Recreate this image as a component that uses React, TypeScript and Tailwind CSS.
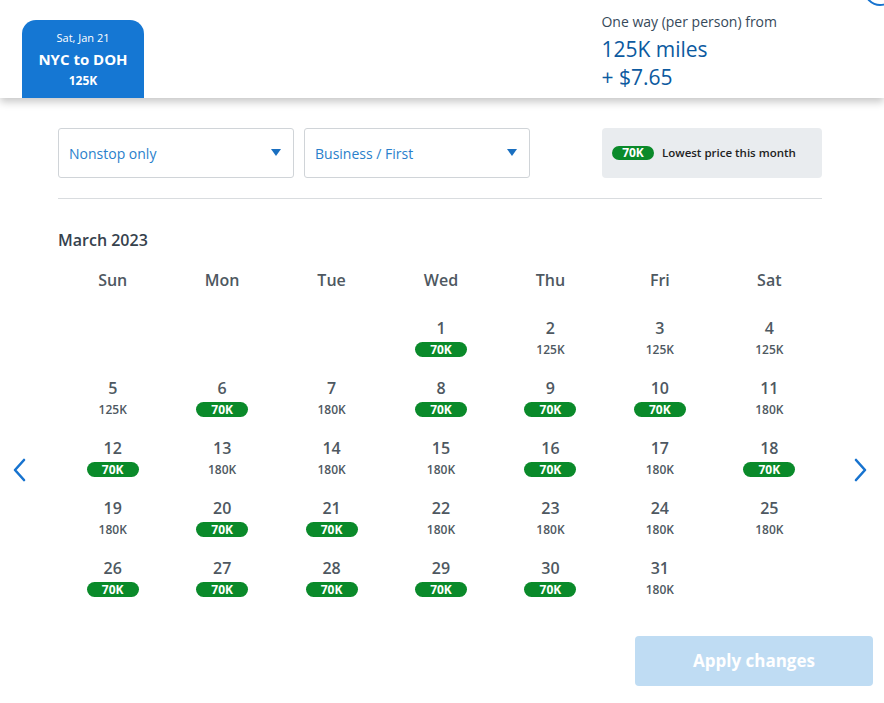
const font = { fontFamily: '"Open Sans", "Noto Sans", sans-serif' };

type Day = { d: number; p: string; low?: boolean } | null;

const days: Day[] = [
  null, null, null,
  { d: 1, p: "70K", low: true },
  { d: 2, p: "125K" },
  { d: 3, p: "125K" },
  { d: 4, p: "125K" },
  { d: 5, p: "125K" },
  { d: 6, p: "70K", low: true },
  { d: 7, p: "180K" },
  { d: 8, p: "70K", low: true },
  { d: 9, p: "70K", low: true },
  { d: 10, p: "70K", low: true },
  { d: 11, p: "180K" },
  { d: 12, p: "70K", low: true },
  { d: 13, p: "180K" },
  { d: 14, p: "180K" },
  { d: 15, p: "180K" },
  { d: 16, p: "70K", low: true },
  { d: 17, p: "180K" },
  { d: 18, p: "70K", low: true },
  { d: 19, p: "180K" },
  { d: 20, p: "70K", low: true },
  { d: 21, p: "70K", low: true },
  { d: 22, p: "180K" },
  { d: 23, p: "180K" },
  { d: 24, p: "180K" },
  { d: 25, p: "180K" },
  { d: 26, p: "70K", low: true },
  { d: 27, p: "70K", low: true },
  { d: 28, p: "70K", low: true },
  { d: 29, p: "70K", low: true },
  { d: 30, p: "70K", low: true },
  { d: 31, p: "180K" },
];

const weekdays = ["Sun", "Mon", "Tue", "Wed", "Thu", "Fri", "Sat"];

function Pill({ children }: { children: string }) {
  return (
    <span className="mt-[3px] inline-flex h-[15px] w-[52px] items-center justify-center rounded-full bg-[#0a8a2a] text-[12px] leading-none font-bold text-white">
      {children}
    </span>
  );
}

function Select({ label, width }: { label: string; width: string }) {
  return (
    <div className={`flex h-[50px] items-center justify-between rounded-[3px] border border-[#d0d4d8] bg-white pr-[12px] pl-[10px] ${width}`}>
      <span className="text-[14px] text-[#2a7fcb]">{label}</span>
      <svg width="10" height="8" viewBox="0 0 10 8">
        <path d="M0 0 H10 L5 7 Z" fill="#1a6fc0" />
      </svg>
    </div>
  );
}

function Chevron({ dir }: { dir: "left" | "right" }) {
  return (
    <svg width="14" height="24" viewBox="0 0 14 24" fill="none">
      <path
        d={dir === "left" ? "M12 2 L3 12 L12 22" : "M2 2 L11 12 L2 22"}
        stroke="#1773cf"
        strokeWidth="2.6"
        strokeLinecap="round"
        strokeLinejoin="round"
      />
    </svg>
  );
}

export default function App() {
  return (
    <div className="relative h-[703px] w-[884px] overflow-hidden bg-white" style={font}>
      <header className="relative z-10 flex h-[98px] justify-between bg-white pl-[22px] shadow-[0_4px_8px_rgba(0,0,0,0.22)]">
        <div className="mt-[20px] flex w-[122px] flex-col items-center rounded-t-[14px] bg-[#1577d3] pt-[10px] text-white">
          <span className="text-[11px] leading-[16px]">Sat, Jan 21</span>
          <span className="mt-[2px] text-[15px] leading-[22px] font-bold">NYC to DOH</span>
          <span className="mt-[2px] text-[12px] leading-[18px] font-bold">125K</span>
        </div>
        <div className="mr-[107px] pt-[12px]">
          <p className="text-[14px] leading-[20px] text-[#36495a]">One way (per person) from</p>
          <p className="mt-[3px] text-[21px] leading-[28px] text-[#0c5aa0]">125K miles</p>
          <p className="text-[21px] leading-[28px] text-[#0c5aa0]">+ $7.65</p>
        </div>
        <div className="absolute -top-[26px] right-[-12px] h-[32px] w-[32px] rounded-full border-2 border-[#1773cf]" />
      </header>

      <div className="flex items-stretch pt-[30px] pr-[62px] pl-[58px]">
        <div className="flex gap-[10px]">
          <Select label="Nonstop only" width="w-[236px]" />
          <Select label="Business / First" width="w-[226px]" />
        </div>
        <div className="ml-auto flex h-[50px] w-[220px] items-center gap-[8px] rounded-[4px] bg-[#e9ecef] pl-[10px]">
          <span className="inline-flex h-[14px] w-[42px] items-center justify-center rounded-full bg-[#0a8a2a] text-[12px] leading-none font-bold text-white">
            70K
          </span>
          <span className="text-[11.5px] font-semibold text-[#222]">Lowest price this month</span>
        </div>
      </div>

      <div className="mt-[20px] mr-[62px] ml-[58px] h-px bg-[#d9dcdf]" />

      <div className="flex items-start">
        <div className="flex w-[58px] justify-center pt-[259px] pr-[20px]">
          <Chevron dir="left" />
        </div>
        <div className="w-[766px]">
          <h2 className="mt-[30px] text-[16px] leading-[22px] font-semibold text-[#36424d]">March 2023</h2>
          <div className="mt-[19px] grid grid-cols-7">
            {weekdays.map((w) => (
              <div key={w} className="text-center text-[16px] leading-[20px] font-semibold text-[#4e5861]">
                {w}
              </div>
            ))}
          </div>
          <div className="mt-[27px] grid grid-cols-7">
            {days.map((day, i) =>
              day ? (
                <div key={i} className="flex h-[60px] flex-col items-center">
                  <span className="text-[16px] leading-[22px] font-semibold text-[#4e5861]">{day.d}</span>
                  {day.low ? (
                    <Pill>{day.p}</Pill>
                  ) : (
                    <span className="mt-[3px] text-[12px] leading-[15px] font-semibold text-[#4e5861]">{day.p}</span>
                  )}
                </div>
              ) : (
                <div key={i} className="h-[60px]" />
              ),
            )}
          </div>
        </div>
        <div className="flex flex-1 justify-center pt-[259px] pl-[14px]">
          <Chevron dir="right" />
        </div>
      </div>

      <div className="flex justify-end pt-[19px] pr-[11px]">
        <button className="h-[50px] w-[238px] rounded-[4px] bg-[#bfdcf3] text-[17px] font-bold text-white">
          Apply changes
        </button>
      </div>
    </div>
  );
}
